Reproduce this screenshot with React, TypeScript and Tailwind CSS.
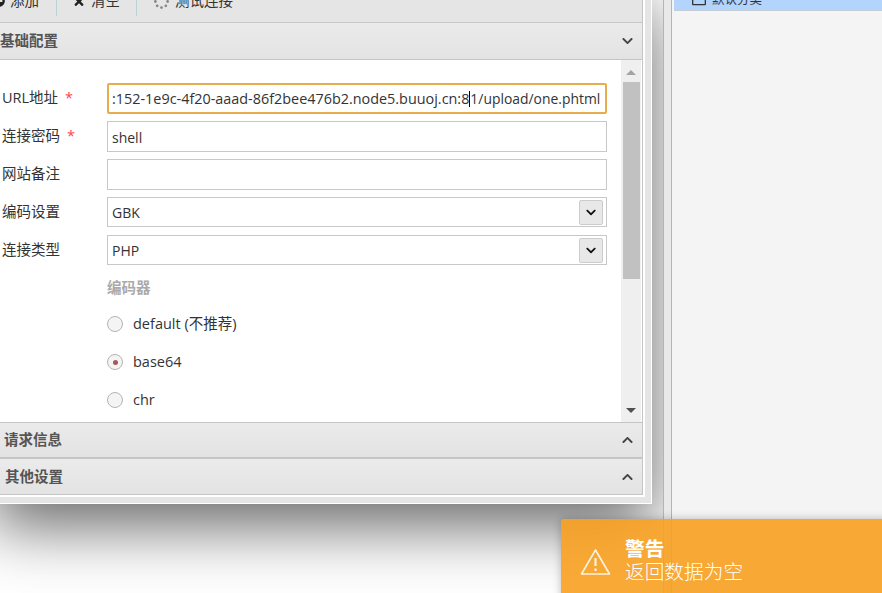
import { FaChevronDown, FaChevronUp, FaPlusCircle, FaSpinner, FaTimes, FaRegFolder } from "react-icons/fa";

const BASE = "font-['Open_Sans','Noto_Sans_CJK_SC',sans-serif]";

function ToolItem({ icon, label, className }: { icon: React.ReactNode; label: string; className: string }) {
  return (
    <div className={`flex h-[30px] items-center border-r border-[#bcd0d8] text-[14.5px] text-[#333] ${className}`}>
      {icon}
      <span>{label}</span>
    </div>
  );
}

function Header({ title, up, className }: { title: string; up?: boolean; className: string }) {
  return (
    <div className={`flex items-center justify-between border-[#c5c5c5] bg-linear-to-b from-[#ebebeb] to-[#e3e3e3] pr-[8px] text-[14.5px] font-bold text-[#555] ${className}`}>
      <span>{title}</span>
      {up ? <FaChevronUp className="h-[12px] w-[13px] text-[#444]" /> : <FaChevronDown className="h-[12px] w-[13px] text-[#444]" />}
    </div>
  );
}

function Row({ label, star, children }: { label: string; star?: boolean; children: React.ReactNode }) {
  return (
    <div className="flex h-[31px] items-start">
      <label className="mt-[4px] flex w-[105px] text-[14.5px] text-[#333]">
        {label}
        {star && <span className="ml-[7px] text-[#f44]">*</span>}
      </label>
      {children}
    </div>
  );
}

function Field({ value }: { value?: string }) {
  return <div className="flex h-[31px] w-[500px] items-center border border-[#c8c8c8] bg-white px-[4px] pt-px text-[14px] text-[#333]">{value}</div>;
}

function SelectField({ value }: { value: string }) {
  return (
    <div className="flex h-[30px] w-[500px] items-center justify-between border border-[#c8c8c8] bg-white pl-[4px] pr-[3px] text-[14px] text-[#333]">
      {value}
      <span className="flex h-[25px] w-[24px] items-center justify-center rounded-[2px] border border-[#ccc] bg-[#e8e8e8]">
        <FaChevronDown className="h-[11px] w-[12px] text-[#111]" />
      </span>
    </div>
  );
}

function Radio({ label, checked }: { label: string; checked?: boolean }) {
  return (
    <div className="flex h-[38px] items-center text-[14.5px] text-[#333]">
      <span className="flex h-[16px] w-[16px] items-center justify-center rounded-full border border-[#b4b4b4] bg-[#f4f4f4]">
        {checked && <span className="h-[5px] w-[5px] rounded-full bg-[#a25a5a]" />}
      </span>
      <span className="ml-[10px]">{label}</span>
    </div>
  );
}

export default function App() {
  return (
    <div className={`relative flex h-[593px] w-[882px] overflow-hidden bg-white ${BASE}`}>
      <div className="w-[663px] shrink-0 bg-white" />

      {/* splitter + right tree panel sit above the dialog's shadow */}
      <div className="relative z-20 w-[9px] shrink-0 border-x border-[#b4b4b4] bg-[#e9e9e9]" />
      <div className="relative z-20 flex-1 bg-[#f4f4f4] pl-[2px]">
        <div className="flex h-[11px] items-end overflow-hidden border-b border-[#c4ccd4] bg-[#b3d4fc]">
          <div className="flex h-[14px] -translate-y-[3px] items-center pl-[18px] text-[12.5px] text-[#333]">
            <FaRegFolder className="mr-[6px] h-[14px] w-[14px]" />
            默认分类
          </div>
        </div>
      </div>

      {/* add-shell dialog */}
      <div className="absolute -left-[8px] -top-[14px] z-10 w-[660px] border-r border-b border-white bg-[#e5e5e5] pr-[6px] pb-[6px] shadow-[0_22px_60px_rgba(0,0,0,0.6)]">
        <div className="border-r-2 border-b-2 border-white">
          <div className="ml-[6px] border-r border-[#c5c5c5]">
            <div className="flex h-[37px] border-b border-[#c8c8c8] bg-[#e5e5e5]">
              <ToolItem className="w-[59px]" icon={<FaPlusCircle className="mr-[5px] -ml-[5px] h-[12px] w-[12px] text-[#222]" />} label="添加" />
              <ToolItem className="w-[80px] pl-[16px]" icon={<FaTimes className="mr-[6px] h-[13px] w-[12px] text-[#222]" />} label="清空" />
              <ToolItem className="border-r-0 pl-[17px]" icon={<FaSpinner className="mr-[6px] h-[15px] w-[15px] text-[#888]" />} label="测试连接" />
            </div>

            <Header title="基础配置" className="h-[37px] border-b pl-[2px]" />

            <div className="flex h-[362px] bg-white pr-[1px]">
              <div className="flex flex-1 flex-col gap-[7px] pl-[4px] pt-[23px]">
                <Row label="URL地址" star>
                  <div className="flex h-[31px] w-[500px] items-center rounded-[2px] border-2 border-[#e7ac4b] bg-white px-[3px] pt-px text-[14.4px] whitespace-nowrap text-[#333]">
                    <span>:152-1e9c-4f20-aaad-86f2bee476b2.node5.buuoj.cn:8</span>
                    <span className="inline-block h-[16px] w-px bg-black" />
                    <span className="text-[13.9px]">1/upload/one.phtml</span>
                  </div>
                </Row>
                <Row label="连接密码" star>
                  <Field value="shell" />
                </Row>
                <Row label="网站备注">
                  <Field />
                </Row>
                <Row label="编码设置">
                  <SelectField value="GBK" />
                </Row>
                <Row label="连接类型">
                  <SelectField value="PHP" />
                </Row>
                <div className="pl-[105px]">
                  <div className="mt-[5px] mb-[6px] text-[14.5px] leading-[20px] font-bold text-[#aaa]">编码器</div>
                  <div className="pt-px">
                    <Radio label="default (不推荐)" />
                    <Radio label="base64" checked />
                    <Radio label="chr" />
                  </div>
                </div>
              </div>

              <div className="flex w-[20px] flex-col bg-[#efefef] px-[2px]">
                <div className="mx-auto mt-[10px] h-0 w-0 border-x-[5px] border-b-[5px] border-x-transparent border-b-[#a3a3a3]" />
                <div className="mt-[7px] h-[197px] w-[17px] bg-[#c1c1c1]" />
                <div className="mx-auto mt-[129px] h-0 w-0 border-x-[5px] border-t-[5px] border-x-transparent border-t-[#505050]" />
              </div>
            </div>

            <Header title="请求信息" up className="h-[36px] border-y pl-[6px]" />
            <Header title="其他设置" up className="h-[37px] border-y pl-[7px]" />
          </div>
        </div>
      </div>

      {/* warning toast */}
      <div className="absolute left-[561px] top-[519px] z-30 flex h-[90px] w-[340px] rounded-tl-[3px] bg-[#f8a01f]/90 shadow-[0_0_8px_rgba(0,0,0,0.25)]">
        <svg className="mt-[29px] ml-[19px] h-[28px] w-[31px]" viewBox="0 0 31 28" fill="none" stroke="#fff" strokeOpacity="0.85" strokeWidth="1.6" strokeLinejoin="round">
          <path d="M15.5 2 L29.5 26 H1.5 Z" />
          <path d="M15.5 10 V18" strokeWidth="2.2" />
          <path d="M15.5 20.5 V23" strokeWidth="2.2" />
        </svg>
        <div className="ml-[14px] mt-[18px] text-[19.7px] leading-[23px] text-white">
          <div className="font-bold">警告</div>
          <div className="font-light">返回数据为空</div>
        </div>
      </div>
    </div>
  );
}
